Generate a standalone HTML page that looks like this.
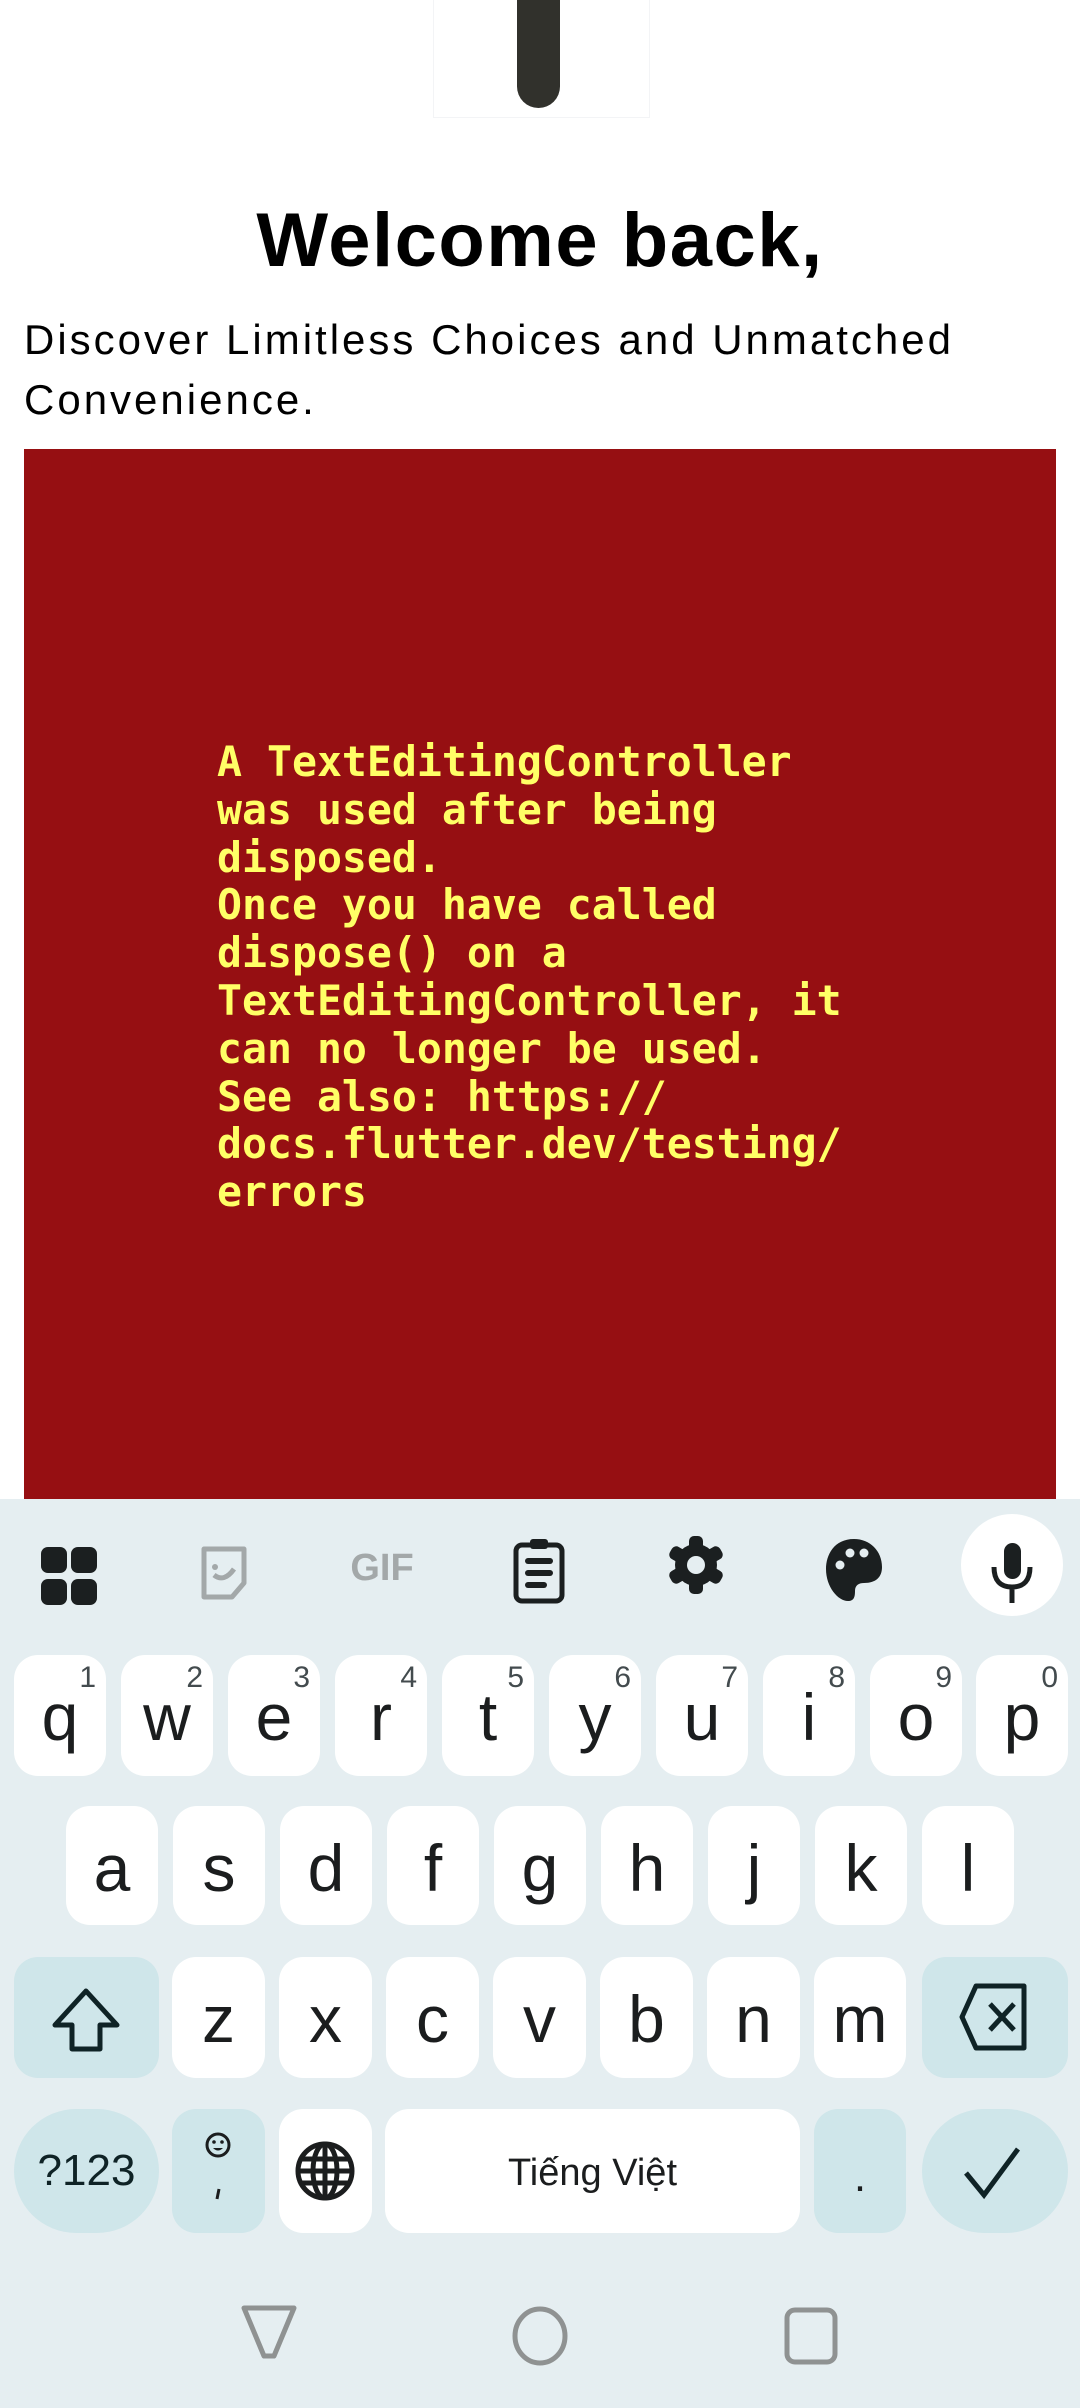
<!DOCTYPE html>
<html><head><meta charset="utf-8"><style>
*{margin:0;padding:0;box-sizing:border-box}
body{width:1080px;height:2408px;background:#fff;position:relative;overflow:hidden;font-family:"Liberation Sans",sans-serif}
.abs{position:absolute}
.key{position:absolute;background:#fff;border-radius:24px;color:#1b1d1e;font-size:66px;text-align:center}
.sp{background:#cfe6ea}
.key .l{position:absolute;left:0;right:0;top:22px;line-height:80px}
.key .n{position:absolute;right:10px;top:6px;font-size:30px;color:#434b4e}
</style></head><body>
<div class="abs" style="left:433px;top:0;width:217px;height:118px;border:1px solid #f3f4f6;border-top:none"></div>
<div class="abs" style="left:517px;top:0;width:43px;height:108px;background:#31312c;border-radius:0 0 22px 22px"></div>
<div class="abs" style="left:0;width:1080px;top:196px;text-align:center;font-weight:bold;font-size:76px;line-height:90px;color:#000;letter-spacing:1.5px">Welcome back,</div>
<div class="abs" style="left:24px;top:310px;width:1056px;font-size:42px;line-height:60px;color:#000;letter-spacing:3px">Discover Limitless Choices and Unmatched<br>Convenience.</div>
<div class="abs" style="left:24px;top:449px;width:1032px;height:1050px;background:#960f12"></div>
<div class="abs" style="left:217px;top:738px;font-family:'DejaVu Sans Mono','Liberation Mono',monospace;font-weight:bold;font-size:41.5px;line-height:47.8px;color:#ffff66;white-space:pre">A TextEditingController
was used after being
disposed.
Once you have called
dispose() on a
TextEditingController, it
can no longer be used.
See also: https://
docs.flutter.dev/testing/
errors</div>
<div class="abs" style="left:0;top:1499px;width:1080px;height:909px;background:#e5eef1"></div>
<svg class="abs" style="left:0;top:1499px" width="1080" height="140">
<g fill="#1b1f20"><rect x="41" y="48" width="26" height="26" rx="7"/><rect x="71" y="48" width="26" height="26" rx="7"/><rect x="41" y="80" width="26" height="26" rx="7"/><rect x="71" y="80" width="26" height="26" rx="7"/></g>
<path d="M204 50h40v34l-12 14h-28z" fill="none" stroke="#a3a8a9" stroke-width="5" stroke-linejoin="round"/>
<path d="M214 76q10 8 20-6" fill="none" stroke="#a3a8a9" stroke-width="5"/><circle cx="215" cy="68" r="3" fill="#a3a8a9"/>
<text x="382" y="81" text-anchor="middle" font-family="Liberation Sans" font-weight="bold" font-size="38" fill="#a3a8a9">GIF</text>
<rect x="516" y="46" width="46" height="56" rx="6" fill="none" stroke="#1b1f20" stroke-width="5"/>
<rect x="530" y="40" width="18" height="10" rx="3" fill="#1b1f20"/>
<g stroke="#1b1f20" stroke-width="6" stroke-linecap="round"><line x1="528" y1="62" x2="550" y2="62"/><line x1="528" y1="74" x2="550" y2="74"/><line x1="528" y1="86" x2="544" y2="86"/></g>
<g transform="translate(696,66)"><circle r="21" fill="#1b1f20"/><g fill="#1b1f20"><rect x="-7" y="-29" width="14" height="58" rx="5"/><rect x="-7" y="-29" width="14" height="58" rx="5" transform="rotate(60)"/><rect x="-7" y="-29" width="14" height="58" rx="5" transform="rotate(120)"/></g><circle r="9" fill="#e5eef1"/></g>
<path d="M854 40c-20 0-28 16-28 30 0 18 12 32 22 32 6 0 7-4 7-10 0-6 4-8 9-8 12 0 18-6 18-16 0-16-12-28-28-28z" fill="#1b1f20"/>
<g fill="#e5eef1"><circle cx="840" cy="66" r="4.5"/><circle cx="850" cy="54" r="4.5"/><circle cx="864" cy="54" r="4.5"/></g>
<circle cx="1012" cy="66" r="51" fill="#fff"/>
<rect x="1004" y="44" width="17" height="36" rx="8.5" fill="#1b1f20"/>
<path d="M994 68q0 20 18 20t18-20M1012 88v16" fill="none" stroke="#1b1f20" stroke-width="5"/>
</svg>
<div class="key" style="left:14px;top:1655px;width:92px;height:121px"><span class="l">q</span><span class="n">1</span></div>
<div class="key" style="left:121px;top:1655px;width:92px;height:121px"><span class="l">w</span><span class="n">2</span></div>
<div class="key" style="left:228px;top:1655px;width:92px;height:121px"><span class="l">e</span><span class="n">3</span></div>
<div class="key" style="left:335px;top:1655px;width:92px;height:121px"><span class="l">r</span><span class="n">4</span></div>
<div class="key" style="left:442px;top:1655px;width:92px;height:121px"><span class="l">t</span><span class="n">5</span></div>
<div class="key" style="left:549px;top:1655px;width:92px;height:121px"><span class="l">y</span><span class="n">6</span></div>
<div class="key" style="left:656px;top:1655px;width:92px;height:121px"><span class="l">u</span><span class="n">7</span></div>
<div class="key" style="left:763px;top:1655px;width:92px;height:121px"><span class="l">i</span><span class="n">8</span></div>
<div class="key" style="left:870px;top:1655px;width:92px;height:121px"><span class="l">o</span><span class="n">9</span></div>
<div class="key" style="left:976px;top:1655px;width:92px;height:121px"><span class="l">p</span><span class="n">0</span></div>
<div class="key" style="left:66px;top:1806px;width:92px;height:119px"><span class="l">a</span></div>
<div class="key" style="left:173px;top:1806px;width:92px;height:119px"><span class="l">s</span></div>
<div class="key" style="left:280px;top:1806px;width:92px;height:119px"><span class="l">d</span></div>
<div class="key" style="left:387px;top:1806px;width:92px;height:119px"><span class="l">f</span></div>
<div class="key" style="left:494px;top:1806px;width:92px;height:119px"><span class="l">g</span></div>
<div class="key" style="left:601px;top:1806px;width:92px;height:119px"><span class="l">h</span></div>
<div class="key" style="left:708px;top:1806px;width:92px;height:119px"><span class="l">j</span></div>
<div class="key" style="left:815px;top:1806px;width:92px;height:119px"><span class="l">k</span></div>
<div class="key" style="left:922px;top:1806px;width:92px;height:119px"><span class="l">l</span></div>
<div class="key sp" style="left:14px;top:1957px;width:145px;height:121px">
<svg width="145" height="121"><path d="M72 34l-31 34h17v24h28v-24h17z" fill="none" stroke="#0f2326" stroke-width="5" stroke-linejoin="round"/></svg></div>
<div class="key" style="left:172px;top:1957px;width:93px;height:121px"><span class="l">z</span></div>
<div class="key" style="left:279px;top:1957px;width:93px;height:121px"><span class="l">x</span></div>
<div class="key" style="left:386px;top:1957px;width:93px;height:121px"><span class="l">c</span></div>
<div class="key" style="left:493px;top:1957px;width:93px;height:121px"><span class="l">v</span></div>
<div class="key" style="left:600px;top:1957px;width:93px;height:121px"><span class="l">b</span></div>
<div class="key" style="left:707px;top:1957px;width:93px;height:121px"><span class="l">n</span></div>
<div class="key" style="left:814px;top:1957px;width:92px;height:121px"><span class="l">m</span></div>
<div class="key sp" style="left:922px;top:1957px;width:146px;height:121px">
<svg width="146" height="121"><path d="M40 60l14-31h48v62h-48z" fill="none" stroke="#0f2326" stroke-width="5" stroke-linejoin="round"/><path d="M68 47l24 26M92 47l-24 26" stroke="#0f2326" stroke-width="5"/></svg></div>
<div class="key sp" style="left:14px;top:2109px;width:145px;height:124px;border-radius:62px;font-size:44px;color:#0f2326"><span class="l" style="top:22px">?123</span></div>
<div class="key sp" style="left:172px;top:2109px;width:93px;height:124px">
<svg width="93" height="124"><circle cx="46" cy="36" r="11" fill="none" stroke="#1b1d1e" stroke-width="3"/><circle cx="42" cy="33" r="1.8" fill="#1b1d1e"/><circle cx="50" cy="33" r="1.8" fill="#1b1d1e"/><path d="M41 39q5 5 10 0z" fill="#1b1d1e"/><path d="M47 80l-2 10" stroke="#1b1d1e" stroke-width="3"/></svg></div>
<div class="key" style="left:279px;top:2109px;width:93px;height:124px">
<svg width="93" height="124"><g fill="none" stroke="#1b1d1e" stroke-width="5"><circle cx="46" cy="62" r="27"/><ellipse cx="46" cy="62" rx="12" ry="27"/><line x1="19" y1="62" x2="73" y2="62"/><line x1="22" y1="50" x2="70" y2="50"/><line x1="22" y1="74" x2="70" y2="74"/><line x1="46" y1="35" x2="46" y2="89"/></g></svg></div>
<div class="key" style="left:385px;top:2109px;width:415px;height:124px;font-size:38px"><span class="l" style="top:24px">Tiếng Việt</span></div>
<div class="key sp" style="left:814px;top:2109px;width:92px;height:124px;font-size:44px"><span class="l" style="top:28px">.</span></div>
<div class="key sp" style="left:922px;top:2109px;width:146px;height:124px;border-radius:62px">
<svg width="146" height="124"><path d="M44 64l18 22 34-46" fill="none" stroke="#0f2326" stroke-width="5"/></svg></div>
<svg class="abs" style="left:0;top:2290px" width="1080" height="90">
<path d="M244 18h50l-20 48h-10z" fill="none" stroke="#8f9292" stroke-width="5" stroke-linejoin="round"/>
<ellipse cx="540" cy="46" rx="25" ry="27" fill="none" stroke="#8f9292" stroke-width="5"/>
<rect x="787" y="20" width="48" height="52" rx="8" fill="none" stroke="#8f9292" stroke-width="5"/>
</svg>
</body></html>
